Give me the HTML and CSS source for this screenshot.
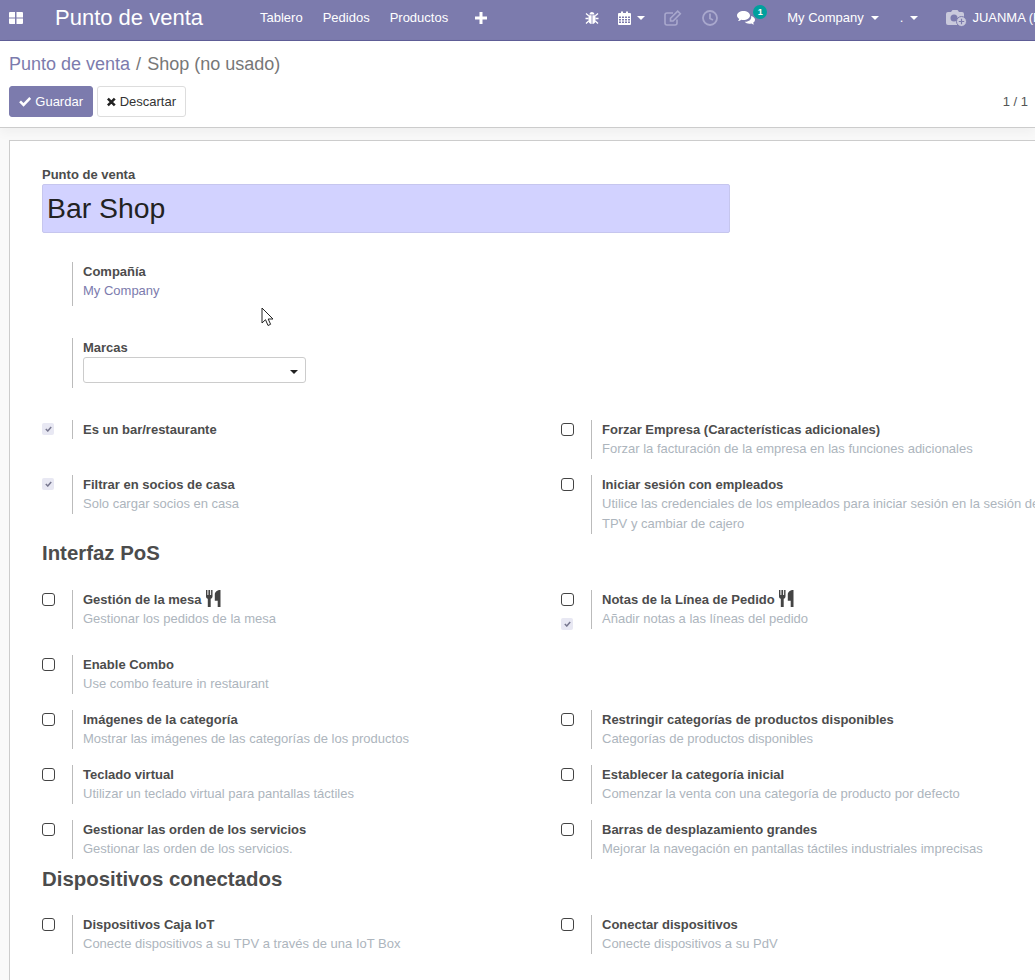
FILE: index.html
```html
<!DOCTYPE html>
<html lang="es">
<head>
<meta charset="utf-8">
<title>Punto de venta</title>
<link rel="stylesheet" href="styles.css">
</head>
<body>
<header class="navbar">
  <svg class="apps" width="14" height="12" viewBox="0 0 14 12"><path fill="#fff" d="M0 1a1 1 0 0 1 1-1h5v5.500H0zM7.500 0H13a1 1 0 0 1 1 1v4.500H7.500zM0 6.500h6V12H1a1 1 0 0 1-1-1zM7.500 6.500H14V11a1 1 0 0 1-1 1H7.500z"/></svg>
  <span class="brand">Punto de venta</span>
  <nav class="menu"><a>Tablero</a><a>Pedidos</a><a>Productos</a></nav>
  <svg class="plus" width="12" height="12" viewBox="0 0 12 12"><path fill="#fff" d="M4.500 0h3v4.500H12v3H7.500V12h-3V7.500H0v-3h4.500z"/></svg>
  <div class="systray">
    <svg class="i-bug" width="14" height="14" viewBox="0 0 14 14"><g fill="#fff"><path d="M4.500 3.500a2.500 2.500 0 0 1 5 0z"/><path d="M3.500 4.300h3.100V13c-1.800-.2-3.100-1.400-3.100-3zM7.400 4.300h3.100V10c0 1.600-1.300 2.800-3.100 3z"/></g><g stroke="#fff" stroke-width="1.300" fill="none"><path d="M1 2.500l2.700 2.300M13 2.500l-2.700 2.300M.5 7.500h3M13.500 7.500h-3M1 12.500l2.700-2.500M13 12.500L10.300 10"/></g></svg>
    <svg class="i-cal" width="13" height="14" viewBox="0 0 13 14"><path fill="#fff" d="M1 2h2V.5h2V2h3V.5h2V2h2a1 1 0 0 1 1 1v10a1 1 0 0 1-1 1H1a1 1 0 0 1-1-1V3a1 1 0 0 1 1-1z"/><path fill="#7c7bad" d="M1 5.500h2v1.500H1zM4 5.500h2v1.500H4zM7 5.500h2v1.500H7zM10 5.500h2v1.500h-2zM1 8h2v1.500H1zM4 8h2v1.500H4zM7 8h2v1.500H7zM10 8h2v1.500h-2zM1 10.500h2V12H1zM4 10.500h2V12H4zM7 10.500h2V12H7zM10 10.500h2V12h-2z"/></svg>
    <i class="caret caret-cal"></i>
    <svg class="i-edit" width="18" height="16" viewBox="0 0 18 16"><g fill="none" stroke="#a9a8cd" stroke-width="1.600"><path d="M13 9.500V13a2 2 0 0 1-2 2H3a2 2 0 0 1-2-2V5a2 2 0 0 1 2-2h6"/><path d="M6.500 8.200l7.200-7 2.600 2.600-7.200 7.200H6.500z"/></g></svg>
    <svg class="i-clock" width="16" height="16" viewBox="0 0 16 16"><g fill="none" stroke="#a9a8cd" stroke-width="1.800"><circle cx="8" cy="8" r="7"/><path d="M8 3.500V8.500l3 1.500"/></g></svg>
    <span class="chat">
      <svg width="18" height="14" viewBox="0 0 18 14"><path fill="#fff" d="M6.500 0C10 0 13 2 13 4.500S10 9 6.500 9c-.8 0-1.500-.1-2.200-.3C3.300 9.600 2 10 1 10c.6-.6 1.100-1.400 1.200-2.200C.8 7 0 5.800 0 4.500 0 2 3 0 6.500 0z"/><path fill="#fff" d="M14 5c2.300.5 4 2 4 3.800 0 1.200-.7 2.200-1.800 3 .1.700.5 1.200 1 1.700-1 0-2-.3-2.800-1-.6.200-1.300.300-2 .300-2 0-3.800-.8-4.700-2 4 .2 7.400-2.300 6.300-5.800z"/></svg>
      <b class="badge">1</b>
    </span>
    <span class="company">My Company</span><i class="caret caret-company"></i>
    <span class="dot">.</span><i class="caret caret-dot"></i>
    <svg class="i-cam" width="21" height="18" viewBox="0 0 21 18"><path fill="#c9c9dc" d="M2 3h3l1.500-2h5L13 3h3a2 2 0 0 1 2 2v9a2 2 0 0 1-2 2H2a2 2 0 0 1-2-2V5a2 2 0 0 1 2-2z"/><circle cx="8" cy="9" r="3.500" fill="#7c7bad"/><circle cx="15.500" cy="12.500" r="5" fill="#c9c9dc" stroke="#7c7bad"/><path stroke="#7c7bad" stroke-width="1.200" d="M15.500 9.800v5.400M12.800 12.500h5.400"/></svg>
    <span class="user">JUANMA (Bar)</span>
  </div>
</header>

<section class="panel">
  <div class="crumbs"><a>Punto de venta</a><span class="sep">/</span><span>Shop (no usado)</span></div>
  <div class="actions">
    <button class="btn btn-primary"><svg width="14" height="11" viewBox="0 0 14 11"><path fill="none" stroke="#fff" stroke-width="3" d="M1.200 5.300l4 4L12.800 1.500"/></svg>Guardar</button>
    <button class="btn btn-plain"><svg width="10" height="10" viewBox="0 0 10 10"><path fill="none" stroke="#222" stroke-width="3" d="M1 1l8 8M9 1l-8 8"/></svg>Descartar</button>
    <span class="pager">1 / 1</span>
  </div>
</section>

<main class="view">
  <form class="sheet">
    <label class="title-label">Punto de venta</label>
    <div class="title-input">Bar Shop</div>

    <div class="block block-company">
      <div class="lbl">Compañía</div>
      <a class="link">My Company</a>
    </div>
    <div class="block block-brand">
      <div class="lbl">Marcas</div>
      <div class="select"><i class="caret caret-dark"></i></div>
    </div>

    <div class="grid grid-first">
      <div class="setting"><div class="box-col"><i class="chk-off"><svg width="7" height="6" viewBox="0 0 7 6"><path fill="none" stroke="#77778f" stroke-width="1.500" d="M.8 3l2 2L6.200 1"/></svg></i></div><div class="txt"><div class="lbl">Es un bar/restaurante</div></div></div>
      <div class="setting"><div class="box-col"><i class="chk"></i></div><div class="txt"><div class="lbl">Forzar Empresa (Características adicionales)</div><div class="help">Forzar la facturación de la empresa en las funciones adicionales</div></div></div>
      <div class="setting"><div class="box-col"><i class="chk-off"><svg width="7" height="6" viewBox="0 0 7 6"><path fill="none" stroke="#77778f" stroke-width="1.500" d="M.8 3l2 2L6.200 1"/></svg></i></div><div class="txt"><div class="lbl">Filtrar en socios de casa</div><div class="help">Solo cargar socios en casa</div></div></div>
      <div class="setting"><div class="box-col"><i class="chk"></i></div><div class="txt"><div class="lbl">Iniciar sesión con empleados</div><div class="help help-wide">Utilice las credenciales de los empleados para iniciar sesión en la sesión de<br>TPV y cambiar de cajero</div></div></div>
    </div>

    <h2 class="sec">Interfaz PoS</h2>
    <div class="grid">
      <div class="setting"><div class="box-col"><i class="chk"></i></div><div class="txt"><div class="lbl">Gestión de la mesa <svg class="fork" width="15" height="17" viewBox="0 0 15 17"><path fill="#444" d="M0 0h1.400v5h1V0h1.700v5h1V0h1.400v6.300c0 1.300-.8 2.200-1.800 2.500V17H1.800V8.800C.8 8.500 0 7.600 0 6.300zM14.500 0V17h-2.800v-6.200H8.800V4.500C8.800 2 11.200 0 14.500 0z"/></svg></div><div class="help">Gestionar los pedidos de la mesa</div></div></div>
      <div class="setting"><div class="box-col"><i class="chk"></i><i class="chk-off chk-second"><svg width="7" height="6" viewBox="0 0 7 6"><path fill="none" stroke="#77778f" stroke-width="1.500" d="M.8 3l2 2L6.200 1"/></svg></i></div><div class="txt"><div class="lbl">Notas de la Línea de Pedido <svg class="fork" width="15" height="17" viewBox="0 0 15 17"><path fill="#444" d="M0 0h1.400v5h1V0h1.700v5h1V0h1.400v6.300c0 1.300-.8 2.200-1.800 2.500V17H1.800V8.800C.8 8.500 0 7.600 0 6.300zM14.500 0V17h-2.800v-6.200H8.800V4.500C8.800 2 11.200 0 14.500 0z"/></svg></div><div class="help">Añadir notas a las líneas del pedido</div></div></div>
      <div class="setting"><div class="box-col"><i class="chk"></i></div><div class="txt"><div class="lbl">Enable Combo</div><div class="help">Use combo feature in restaurant</div></div></div>
      <div class="setting setting-empty"></div>
      <div class="setting"><div class="box-col"><i class="chk"></i></div><div class="txt"><div class="lbl">Imágenes de la categoría</div><div class="help">Mostrar las imágenes de las categorías de los productos</div></div></div>
      <div class="setting"><div class="box-col"><i class="chk"></i></div><div class="txt"><div class="lbl">Restringir categorías de productos disponibles</div><div class="help">Categorías de productos disponibles</div></div></div>
      <div class="setting"><div class="box-col"><i class="chk"></i></div><div class="txt"><div class="lbl">Teclado virtual</div><div class="help">Utilizar un teclado virtual para pantallas táctiles</div></div></div>
      <div class="setting"><div class="box-col"><i class="chk"></i></div><div class="txt"><div class="lbl">Establecer la categoría inicial</div><div class="help">Comenzar la venta con una categoría de producto por defecto</div></div></div>
      <div class="setting"><div class="box-col"><i class="chk"></i></div><div class="txt"><div class="lbl">Gestionar las orden de los servicios</div><div class="help">Gestionar las orden de los servicios.</div></div></div>
      <div class="setting"><div class="box-col"><i class="chk"></i></div><div class="txt"><div class="lbl">Barras de desplazamiento grandes</div><div class="help">Mejorar la navegación en pantallas táctiles industriales imprecisas</div></div></div>
    </div>

    <h2 class="sec sec-devices">Dispositivos conectados</h2>
    <div class="grid">
      <div class="setting"><div class="box-col"><i class="chk"></i></div><div class="txt"><div class="lbl">Dispositivos Caja IoT</div><div class="help">Conecte dispositivos a su TPV a través de una IoT Box</div></div></div>
      <div class="setting"><div class="box-col"><i class="chk"></i></div><div class="txt"><div class="lbl">Conectar dispositivos</div><div class="help">Conecte dispositivos a su PdV</div></div></div>
    </div>
  </form>
</main>

<svg class="cursor" width="14" height="20" viewBox="0 0 14 20"><path fill="#fff" stroke="#222" d="M1 1v15l3.500-3.300L7 18.500l2.600-1.200L7.200 12H12z"/></svg>
</body>
</html>
```
FILE: styles.css
```css
* { box-sizing: border-box; }
html, body { margin: 0; padding: 0; height: 980px; overflow: hidden; }
body {
  width: 1035px;
  position: relative;
  font-family: "Liberation Sans", Arial, sans-serif;
  font-size: 13px;
  line-height: 1.5;
  color: #4c4c4c;
  background: #f9f9f9;
}

/* Navbar */
.navbar {
  display: flex;
  align-items: center;
  height: 41px;
  background: #7c7bad;
  border-bottom: 1px solid #5f5e97;
  color: #fff;
  padding: 0 0 5px 9px;
  white-space: nowrap;
}
.apps { flex: none; }
.brand { font-size: 22px; margin-left: 32px; line-height: 34px; }
.menu { display: flex; gap: 20px; margin-left: 57px; }
.plus { flex: none; margin-left: 27px; }
.systray { display: flex; align-items: center; margin-left: 98px; }
.systray svg { flex: none; }
.i-cal { margin-left: 19px; }
.caret { display: block; width: 0; height: 0; border-left: 4px solid transparent; border-right: 4px solid transparent; border-top: 4px solid #fff; }
.caret-cal { margin-left: 6px; }
.i-edit { margin-left: 19px; }
.i-clock { margin-left: 20px; }
.chat { position: relative; display: flex; margin-left: 19px; }
.badge {
  position: absolute;
  left: 16px;
  top: -6px;
  width: 14px;
  height: 14px;
  border-radius: 50%;
  background: #00a09d;
  font-size: 9px;
  line-height: 14px;
  text-align: center;
}
.company { margin-left: 32px; }
.caret-company { margin-left: 7px; }
.dot { margin-left: 21px; }
.caret-dot { margin-left: 7px; }
.i-cam { margin-left: 28px; }
.user { margin-left: 5px; }

/* Control panel */
.panel {
  height: 87px;
  background: #fff;
  border-bottom: 1px solid #ccc;
  padding: 10px 7px 0 9px;
  box-shadow: 0 5px 10px rgba(0, 0, 0, .04);
}
.crumbs { font-size: 18px; line-height: 27px; color: #777; white-space: nowrap; }
.crumbs a { color: #7c7bad; }
.sep { margin: 0 6px; }
.actions { display: flex; align-items: center; margin-top: 8px; }
.btn {
  display: flex;
  align-items: center;
  gap: 4px;
  height: 31px;
  font: inherit;
  border-radius: 3px;
  padding: 0 9px;
}
.btn-primary { background: #7c7bad; border: 1px solid #7c7bad; color: #fff; width: 84px; }
.btn-plain { background: #fff; border: 1px solid #ddd; color: #333; margin-left: 4px; width: 89px; }
.pager { margin-left: auto; color: #555; }

/* Sheet */
.view { padding: 12px 0 0 9px; }
.sheet {
  width: 1200px;
  height: 900px;
  background: #fff;
  border: 1px solid #ccc;
  padding: 24px 0 0 32px;
}
.title-label { display: block; font-weight: 700; line-height: 19px; }
.title-input {
  width: 688px;
  height: 49px;
  background: #d2d2ff;
  border: 1px solid #c6c6ee;
  border-radius: 2px;
  padding-left: 4px;
  font-size: 28.4px;
  line-height: 47px;
  color: #222;
}
.block { margin-left: 30px; border-left: 1px solid #bbb; padding-left: 10px; }
.block-company { margin-top: 29px; height: 44px; }
.block-brand { margin-top: 32px; height: 50px; }
.lbl { font-weight: 700; line-height: 19px; white-space: nowrap; }
.link { display: block; color: #7c7bad; line-height: 20px; }
.select {
  position: relative;
  width: 223px;
  height: 26px;
  background: #fff;
  border: 1px solid #ccc;
  border-radius: 3px;
}
.caret-dark { position: absolute; right: 7px; top: 12px; border-top-color: #222; }

/* Settings grid */
.grid { display: grid; grid-template-columns: 519px 519px; row-gap: 16px; align-items: start; }
.grid-first { margin-top: 32px; }
.setting { display: flex; align-items: flex-start; }
.box-col { width: 30px; flex: none; padding-top: 3px; display: flex; flex-direction: column; }
.txt { border-left: 1px solid #bbb; padding-left: 10px; }
.help { color: #adb5bd; line-height: 20px; white-space: nowrap; }
.chk { display: block; width: 13px; height: 13px; border: 1.500px solid #444; border-radius: 3px; background: #fff; }
.chk-off {
  display: flex;
  align-items: center;
  justify-content: center;
  width: 12px;
  height: 12px;
  border-radius: 2px;
  background: #e8e8f3;
}
.chk-second { margin: 12px 0 9px; }
.fork { margin-left: 1px; vertical-align: -3px; }
.sec { margin: 6px 0 24px; font-size: 20.4px; font-weight: 700; line-height: 26px; color: #4c4c4c; }
.sec-devices { margin: 7px 0 23px; }

.cursor { position: absolute; left: 261px; top: 307px; }
```
